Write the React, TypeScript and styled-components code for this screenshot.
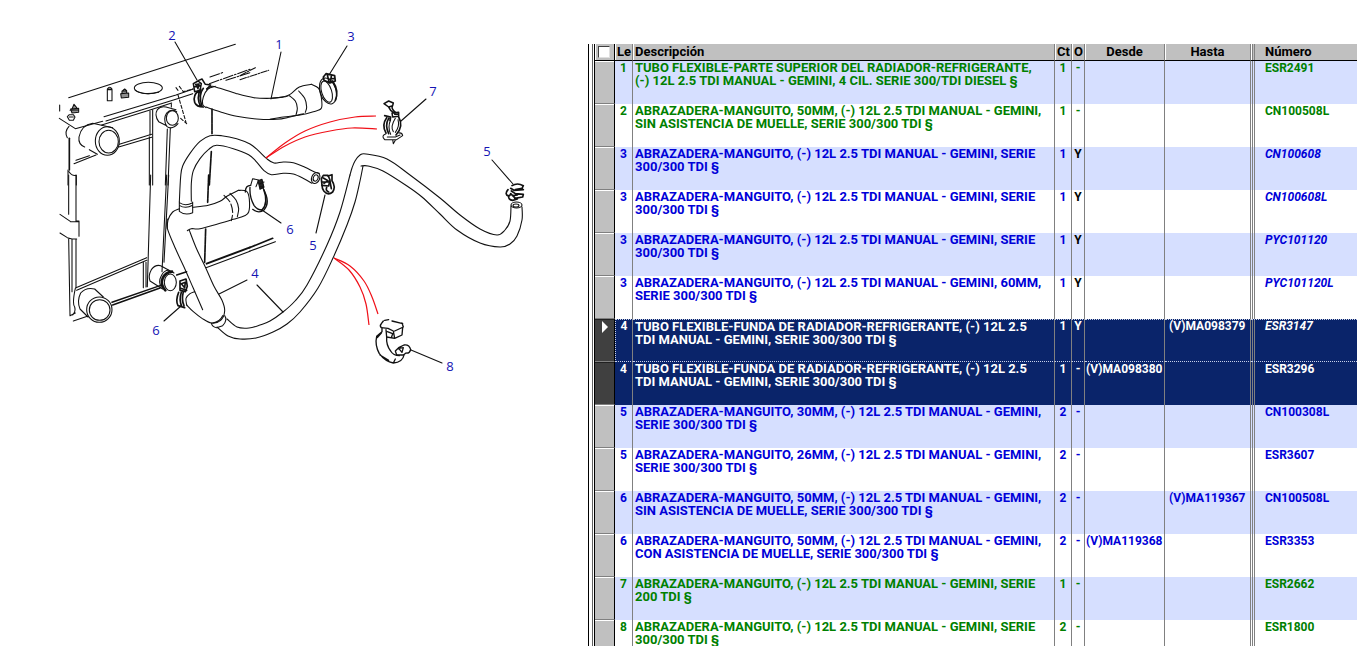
import React from 'react';
import styled, { createGlobalStyle, css } from 'styled-components';

const GlobalStyle = createGlobalStyle`
  *, *::before, *::after { box-sizing: border-box; }
  body { margin: 0; background: #fff; }
`;

const Page = styled.main`
  display: grid;
  grid-template-columns: minmax(0, 588fr) minmax(0, 769fr);
  height: 100vh;
  overflow: hidden;
  background: #fff;
  font-family: Roboto, 'Liberation Sans', sans-serif;
  font-size: 12px;
  line-height: 13px;
`;

const DiagramPane = styled.section`
  overflow: hidden;
`;

const Drawing = styled.svg`
  display: block;
  width: 100%;
  height: auto;
`;

const Callout = styled.text`
  fill: #1414b4;
  font-family: 'Open Sans', 'Noto Sans', sans-serif;
  font-size: 13px;
  text-anchor: middle;
`;

const ListPane = styled.section`
  margin-top: 44px;
  padding-left: 3px;
  border-left: 1px solid #000;
  overflow: hidden;
`;

const ListFrame = styled.div`
  padding-left: 1px;
  border-left: 1px solid #606060;
`;

const PartsTable = styled.table`
  width: 100%;
  table-layout: fixed;
  border-collapse: separate;
  border-spacing: 0;
  border-left: 1px solid #000;
  font-weight: 700;
`;

const Col = styled.col<{ $w?: number }>`
  ${p => p.$w && `width: ${p.$w}px;`}
`;

const rules = css`
  background-image: linear-gradient(90deg, transparent 1px, #808080 1px 2px, transparent 2px 3px, #808080 3px 4px, transparent 4px);
`;

type Align = 'left' | 'center';

const HeadCell = styled.th<{ $align?: Align; $number?: boolean; $gutter?: boolean }>`
  height: 17px;
  padding: 1px 0 0 ${p => (p.$number ? 14 : p.$align === 'center' ? 0 : 2)}px;
  overflow: hidden;
  vertical-align: top;
  white-space: nowrap;
  font-size: 13px;
  text-align: ${p => p.$align ?? 'left'};
  color: #000;
  background-color: #c0c0c0;
  border-right: ${p => (p.$number ? 0 : 1)}px solid ${p => (p.$gutter ? '#000' : '#808080')};
  border-bottom: 1px solid #000;
  box-shadow: inset 1px 0 #fff;
  ${p => p.$number && rules}
`;

const SelectAll = styled.input`
  appearance: none;
  display: block;
  width: 12px;
  height: 12px;
  margin: 1px 0 0 1px;
  background: #fff;
  border: 1px solid #404040;
  border-right-color: #e0e0e0;
  border-bottom-color: #e0e0e0;
`;

type Tone = 'green' | 'blue';

const Row = styled.tr<{ $tone: Tone; $selected?: boolean; $striped: boolean }>`
  height: 43px;
  color: ${p => (p.$selected ? '#fff' : p.$tone === 'green' ? '#008000' : '#0000d8')};
  background: ${p => (p.$selected ? '#0a246a' : p.$striped ? '#d6dfff' : '#fff')};
`;

const Cell = styled.td<{ $align?: Align; $focused?: boolean; $first?: boolean; $dark?: boolean; $pad?: number }>`
  height: 43px;
  padding: ${p => (p.$focused ? 0 : 1)}px 0 0 ${p => p.$pad ?? (p.$align === 'center' ? 0 : 2)}px;
  vertical-align: top;
  white-space: nowrap;
  overflow: hidden;
  text-align: ${p => p.$align ?? 'left'};
  border-right: 1px solid #808080;
  ${p => p.$dark && 'color: #000;'}
  ${p => p.$focused && css`
    border-top: 1px dotted #c8d0e8;
    border-bottom: 1px dotted #c8d0e8;
  `}
  ${p => p.$focused && p.$first && 'border-left: 1px dotted #c8d0e8;'}
`;

const DescriptionCell = styled(Cell)`
  padding-top: 0;
  font-size: 13px;
`;

const NumberCell = styled(Cell)<{ $italic?: boolean }>`
  border-right: 0;
  font-style: ${p => (p.$italic ? 'italic' : 'normal')};
  ${rules}
`;

const Gutter = styled.td<{ $selected?: boolean }>`
  padding: 2px 0 0 7px;
  vertical-align: top;
  background: ${p => (p.$selected ? '#404040' : '#c0c0c0')};
  border-right: 1px solid #000;
  border-bottom: 1px solid #808080;
  box-shadow: inset 0 1px ${p => (p.$selected ? '#202020' : '#fff')};
`;

const Marker = styled.svg`
  display: block;
  width: 7px;
  height: 12px;
`;

interface Part {
  ref: number;
  lines: [string, string];
  qty: number;
  opt: '-' | 'Y';
  from?: string;
  to?: string;
  number: string;
  tone: Tone;
  state?: 'focused' | 'selected';
}

const parts: Part[] = [
  { ref: 1, lines: ['TUBO FLEXIBLE-PARTE SUPERIOR DEL RADIADOR-REFRIGERANTE,', '(-) 12L 2.5 TDI MANUAL - GEMINI, 4 CIL. SERIE 300/TDI DIESEL §'], qty: 1, opt: '-', number: 'ESR2491', tone: 'green' },
  { ref: 2, lines: ['ABRAZADERA-MANGUITO, 50MM, (-) 12L 2.5 TDI MANUAL - GEMINI,', 'SIN ASISTENCIA DE MUELLE, SERIE 300/300 TDI §'], qty: 1, opt: '-', number: 'CN100508L', tone: 'green' },
  { ref: 3, lines: ['ABRAZADERA-MANGUITO, (-) 12L 2.5 TDI MANUAL - GEMINI, SERIE', '300/300 TDI §'], qty: 1, opt: 'Y', number: 'CN100608', tone: 'blue' },
  { ref: 3, lines: ['ABRAZADERA-MANGUITO, (-) 12L 2.5 TDI MANUAL - GEMINI, SERIE', '300/300 TDI §'], qty: 1, opt: 'Y', number: 'CN100608L', tone: 'blue' },
  { ref: 3, lines: ['ABRAZADERA-MANGUITO, (-) 12L 2.5 TDI MANUAL - GEMINI, SERIE', '300/300 TDI §'], qty: 1, opt: 'Y', number: 'PYC101120', tone: 'blue' },
  { ref: 3, lines: ['ABRAZADERA-MANGUITO, (-) 12L 2.5 TDI MANUAL - GEMINI, 60MM,', 'SERIE 300/300 TDI §'], qty: 1, opt: 'Y', number: 'PYC101120L', tone: 'blue' },
  { ref: 4, lines: ['TUBO FLEXIBLE-FUNDA DE RADIADOR-REFRIGERANTE, (-) 12L 2.5', 'TDI MANUAL - GEMINI, SERIE 300/300 TDI §'], qty: 1, opt: 'Y', to: '(V)MA098379', number: 'ESR3147', tone: 'blue', state: 'focused' },
  { ref: 4, lines: ['TUBO FLEXIBLE-FUNDA DE RADIADOR-REFRIGERANTE, (-) 12L 2.5', 'TDI MANUAL - GEMINI, SERIE 300/300 TDI §'], qty: 1, opt: '-', from: '(V)MA098380', number: 'ESR3296', tone: 'blue', state: 'selected' },
  { ref: 5, lines: ['ABRAZADERA-MANGUITO, 30MM, (-) 12L 2.5 TDI MANUAL - GEMINI,', 'SERIE 300/300 TDI §'], qty: 2, opt: '-', number: 'CN100308L', tone: 'blue' },
  { ref: 5, lines: ['ABRAZADERA-MANGUITO, 26MM, (-) 12L 2.5 TDI MANUAL - GEMINI,', 'SERIE 300/300 TDI §'], qty: 2, opt: '-', number: 'ESR3607', tone: 'blue' },
  { ref: 6, lines: ['ABRAZADERA-MANGUITO, 50MM, (-) 12L 2.5 TDI MANUAL - GEMINI,', 'SIN ASISTENCIA DE MUELLE, SERIE 300/300 TDI §'], qty: 2, opt: '-', to: '(V)MA119367', number: 'CN100508L', tone: 'blue' },
  { ref: 6, lines: ['ABRAZADERA-MANGUITO, 50MM, (-) 12L 2.5 TDI MANUAL - GEMINI,', 'CON ASISTENCIA DE MUELLE, SERIE 300/300 TDI §'], qty: 2, opt: '-', from: '(V)MA119368', number: 'ESR3353', tone: 'blue' },
  { ref: 7, lines: ['ABRAZADERA-MANGUITO, (-) 12L 2.5 TDI MANUAL - GEMINI, SERIE', '200 TDI §'], qty: 1, opt: '-', number: 'ESR2662', tone: 'green' },
  { ref: 8, lines: ['ABRAZADERA-MANGUITO, (-) 12L 2.5 TDI MANUAL - GEMINI, SERIE', '300/300 TDI §'], qty: 2, opt: '-', number: 'ESR1800', tone: 'green' },
];

const callouts: [string, number, number][] = [
  ['2', 172, 40], ['1', 279, 49], ['3', 351, 41], ['7', 433, 96], ['5', 487, 156],
  ['6', 290, 234], ['5', 313, 250], ['4', 255, 278], ['6', 156, 335], ['8', 450, 371],
];

/** Smooth curve through a list of points. */
function through(points: string): string {
  const p = points.trim().split(/\s+/).map(s => s.split(',').map(Number));
  let d = `M${p[0][0]} ${p[0][1]}`;
  for (let i = 0; i < p.length - 1; i++) {
    const a = p[i - 1] ?? p[i];
    const b = p[i];
    const c = p[i + 1];
    const e = p[i + 2] ?? c;
    d += `C${b[0] + (c[0] - a[0]) / 6} ${b[1] + (c[1] - a[1]) / 6} ${c[0] - (e[0] - b[0]) / 6} ${c[1] - (e[1] - b[1]) / 6} ${c[0]} ${c[1]}`;
  }
  return d;
}

const Curve = ({ pts, ...rest }: { pts: string } & React.SVGProps<SVGPathElement>) => (
  <path d={through(pts)} {...rest} />
);

/* Each area of the drawing has its own grid of three units to the pixel. */
const area = (x: number, y: number) => `translate(${x} ${y}) scale(0.33333)`;

const Diagram = () => (
  <Drawing viewBox="0 0 588 646" role="img" aria-label="Radiador y manguitos">
    <g fill="none" stroke="#111" strokeWidth="3.2" strokeLinecap="round" strokeLinejoin="round">
      {/* radiator top and left tank */}
      <g transform={area(50, 15)}>
        <path d="M56 248L556 88M29 270V288M28 310L76 341L158 319M162 305L378 240L430 222M168 318L380 252L428 236M155 330L300 285L365 264" />
        <path d="M478 206L600 163M480 186L520 172M528 196L600 173" strokeDasharray="30 5 5 5" />
        <path d="M378 218L384 226M384 240L408 322M388 214L400 230L428 222M392 310L410 326" strokeDasharray="10 6" />
        <ellipse cx="295" cy="219" rx="42" ry="17" />
        <path d="M256 226Q280 242 326 232" />
        <path d="M172 222V257H186V222ZM172 222Q179 212 186 222M174 224H184" />
        <path d="M212 236L236 234V247L214 249ZM216 236V228H230V234M218 227L224 222L230 227" fill="#444" fillOpacity="0.6" />
        <path d="M62 282L86 280V292L66 294ZM66 282L72 268L80 278M60 286L86 284" fill="#444" fillOpacity="0.6" />
        <path d="M52 305L58 299H70L75 306L70 316H58ZM58 306H70" />
        <path d="M57 334Q42 350 52 368M54 465V510M57 470Q66 484 79 481V510" />
        <path d="M58 370V465" strokeWidth="5" />
        {/* upper left outlet */}
        <path d="M142 418L118 404M104 396Q84 388 87 366Q94 330 128 325L188 338" />
        <ellipse cx="172" cy="378" rx="36" ry="43" />
        <ellipse cx="176" cy="380" rx="29" ry="34" />
        <path d="M72 446L138 420M78 436L118 422M208 388L305 358M206 396L305 367" />
        {/* middle column */}
        <path d="M300 288V360M308 284V510M298 365V510M352 342L346 510M361 340L354 510M364 266V276" />
        {/* small outlet */}
        <path d="M350 332L326 320Q312 300 322 284Q332 272 348 276L378 284M384 326Q366 346 350 334Q338 312 350 294Q362 280 380 290" />
        <ellipse cx="367" cy="309" rx="18" ry="22" />
        <path d="M486 282V356M484 410L478 510" strokeWidth="5" strokeDasharray="20 2" />
      </g>

      {/* radiator bottom */}
      <g transform={area(50, 175)}>
        <path d="M56 0V118M78 0V138H87V184M62 140H87M30 118L62 140M30 174L52 188L66 192H80M56 190L60 422L76 414M66 192V350M78 192V338M76 340Q66 386 74 396Q78 412 68 420M70 438L112 424" />
        <path d="M78 338L290 248M80 346L290 256M302 0L292 335M350 0L336 290M356 0L342 262M280 262V338M288 262V336" />
        <path d="M186 382L330 332M188 390L330 339M380 300L410 290" strokeWidth="4.5" />
        <path d="M470 266L600 217" strokeWidth="6" />
        <path d="M468 278L600 229" />
        <path d="M476 0L473 82M467 162L464 262" strokeWidth="5" strokeDasharray="22 2" />
        {/* lower left outlet */}
        <path d="M114 426L90 402Q80 378 92 354Q108 336 134 342L160 366" />
        <circle cx="148" cy="404" r="38" />
        <circle cx="149" cy="405" r="31" />
        {/* lower middle outlet */}
        <path d="M338 342L300 318Q294 302 304 284Q316 268 332 272L372 294" />
        <path d="M346 346Q330 330 338 310Q346 292 366 290" strokeWidth="8" />
        <ellipse cx="361" cy="322" rx="18" ry="25" />
        <path d="M334 336Q324 320 334 302Q342 286 356 286" />
      </g>
      <g transform={area(240, 175)}>
        <path d="M28 218L98 190" strokeWidth="5" />
        <path d="M28 229L106 200" />
      </g>

      {/* bypass hose */}
      <g transform={area(150, 100)}>
        <Curve pts="88,306 92,230 98,198 120,160 150,124 180,107 215,107 260,116 300,132 325,152 350,176 372,189 400,186 430,188 465,202 494,216 508,220" />
        <Curve pts="124,304 124,250 130,212 150,176 176,148 200,136 250,146 296,164 318,184 342,212 364,224 400,220 430,222 462,236 486,250" />
        <ellipse cx="497" cy="234" rx="12" ry="17" transform="rotate(22 497 234)" />
        <ellipse cx="497" cy="234" rx="7" ry="10" transform="rotate(22 497 234)" />
        <path d="M88 306V334Q106 348 128 338V306M88 308Q106 320 128 308M88 316Q106 328 128 316" />
        {/* Y branch to the water pump */}
        <Curve pts="128,322 175,316 210,304 232,288 265,271" />
        <Curve pts="88,326 68,336 54,360 52,386" />
        <Curve pts="265,271 290,274 298,298 296,336 282,348 250,358 210,370 150,386 124,386 112,392" />
        <Curve pts="222,286 240,306 248,336 244,362" strokeDasharray="26 8" />
        <Curve pts="240,280 258,300 266,326 262,350" />
        {/* clamp 6, upper */}
        <path d="M286 276Q286 256 302 256M300 262Q298 290 312 316Q322 330 336 330M308 328Q326 342 342 330Q358 312 348 284L338 262" strokeWidth="4" />
        <path d="M302 256L308 236L326 240L318 260" />
        <path d="M324 242L336 238L342 262L330 268ZM328 252L342 246M330 260H342" fill="#222" />
        <path d="M342 270Q356 310 336 330" strokeWidth="5" />
        {/* clamp 5, middle */}
        <path d="M514 236L520 226H534L540 240L536 258L516 256ZM520 234L534 242L522 250M516 246H538" strokeWidth="5" />
        <path d="M534 228L546 224L546 242Q558 260 548 276Q534 288 522 274Q516 266 516 256M530 262Q526 272 536 276M540 244L544 266" strokeWidth="5" />
      </g>

      {/* top hose */}
      <g transform={area(50, 15)}>
        <Curve pts="470,222 486,214 510,220 560,236 612,248 663,250 700,246 715,242" />
        <Curve pts="468,276 510,290 560,304 620,312 680,313 720,306 760,296" />
        <Curve pts="496,214 474,222 460,246 458,268 468,278" />
        {/* clamp 2 */}
        <path d="M446 228Q428 240 434 262Q440 276 460 276M452 222Q438 248 452 276M460 220Q444 240 456 274" strokeWidth="5" />
        <path d="M430 206L444 198L454 206L450 226L434 230ZM432 216L450 212M446 196L456 192L466 208L482 210L470 222" strokeWidth="4.5" />
        <path d="M436 208L448 206L444 222Z" fill="#222" />
      </g>
      <g transform={area(240, 15)}>
        <Curve pts="93,250 128,246 150,238 178,216 214,208" />
        <Curve pts="214,208 236,220 244,248 244,280 220,290 180,300 130,306 90,313" />
        <Curve pts="148,242 166,258 172,280 168,300" />
        <Curve pts="176,228 194,250 200,276 196,292" />
        <path d="M0 182L46 158M0 194L86 166" strokeDasharray="20 4 5 4" />
        {/* clamp 3 */}
        <ellipse cx="264" cy="228" rx="24" ry="40" transform="rotate(-18 264 228)" />
        <ellipse cx="260" cy="230" rx="15" ry="33" transform="rotate(-18 260 230)" />
        <path d="M250 186L258 176L284 182L286 198L270 204L252 196ZM262 180L268 204M274 182L272 200M270 192L284 190" strokeWidth="5" />
        <path d="M278 198Q298 228 286 256" strokeWidth="5" />
        {/* clip 7 */}
        <path d="M432 266L446 258L460 264L458 272L446 276ZM446 276L452 286L462 294M458 272Q452 280 466 292M456 294L476 292V304L458 306ZM464 298H474" strokeWidth="4.5" />
        <path d="M434 302L452 306L450 316M440 308Q424 330 438 354M446 310Q434 330 446 356M476 306Q492 334 468 360" strokeWidth="5" />
        <path d="M452 314Q442 336 452 358M466 310Q450 336 460 350M474 314Q480 334 466 352" />
        <path d="M438 356Q422 362 434 374H470L488 362Q486 352 476 354M442 366L466 366L480 360M458 374L460 386L466 376" />
      </g>

      {/* lower hose */}
      <g transform={area(50, 175)}>
        <Curve pts="352,132 352,160 376,220 402,276 430,340 458,404" />
        <Curve pts="418,166 440,222 466,276 492,334 516,376 524,408 512,436 484,444 456,430 430,410 410,390" />
        <Curve pts="410,390 408,370 420,356 434,350" />
        <path d="M484 444Q486 456 500 458M524 422Q534 436 518 452L500 458M488 444Q510 440 518 422" />
        {/* clamp 6, lower */}
        <path d="M390 318L408 312L412 334L406 350L390 346ZM394 326L406 322L404 338ZM392 340L410 346" strokeWidth="5" />
        <path d="M386 352Q376 376 384 392L404 398M394 352Q386 376 396 396M400 350Q394 376 402 392" strokeWidth="5" />
      </g>

      {/* expansion tank hose */}
      <g strokeWidth="1.1">
        <Curve pts="350,175 340,212 327,245 307,285 295,301 283,312 270,321 260,325 249,328 237,327 227,319" />
        <Curve pts="363,166 360,181 355,202 347,225 333,258 318,288 300,312 287,324 273,332 256,338 240,339 228,336 217,327" />
        <Curve pts="350,175 352,168 355,161 360,155 366,154 387,159 410,175 440,198 460,215 480,229 497,235 505,230 510,221 511,206" />
        <Curve pts="361,166 368,166 383,171 407,186 422,197 440,214 457,230 480,243 500,247 510,244 517,236 522,220 522,207" />
        <ellipse cx="516.500" cy="205" rx="5.500" ry="3" />
        <ellipse cx="516" cy="205.500" rx="3" ry="1.500" />
      </g>
      <g transform={area(440, 135)} strokeWidth="5">
        <path d="M216 152Q232 142 250 152L246 160L226 164M204 164Q192 178 206 184L212 178M212 160L222 166L250 164M214 168L226 176L250 178L248 186L224 190M206 182Q204 194 218 196L232 192M212 176L224 188M218 182L232 180" />
      </g>

      {/* clip 8 */}
      <g transform={area(240, 175)} strokeWidth="4">
        <path d="M430 438L424 446M434 436L446 434M456 438L488 446M424 446Q418 452 424 458L444 460L460 468L464 490L440 486L438 464M464 468L490 456L486 444M488 458L486 480L464 490M442 470L458 476L454 488" />
        <path d="M426 458V470L410 484Q404 510 418 536Q436 560 460 564Q488 562 492 540M440 486Q438 510 452 528Q460 542 478 542M412 488L424 474M420 540L446 556M460 564L466 552" />
        <path d="M466 528L476 518L492 510Q508 508 512 524Q508 536 498 534L490 540L470 540ZM476 520L490 518L486 532Z" />
      </g>

      {/* leader lines */}
      <g strokeWidth="1.1">
        <path d="M175 42L197 80M281 52L271 99M347 46L329 75M426 99L401 121M492 160L513 184M262 210L281 223M325 195L316 233M247 280L219 294M257 285L283 312M164 321L181 306M411 350L442 363" />
      </g>
    </g>

    <g fill="none" stroke="#f01018" strokeWidth="1.2">
      <Curve pts="266,158 285,143 305,131 330,122 355,117 376,116" />
      <Curve pts="266,158 285,146 305,137 330,131 352,128 377,129" />
      <Curve pts="334,258 349,270 360,287 366,304 369,325" />
      <Curve pts="334,258 350,266 364,281 372,297 378,314" />
    </g>

    {callouts.map(([label, x, y]) => (
      <Callout key={`${label}-${x}`} x={x} y={y}>{label}</Callout>
    ))}
  </Drawing>
);

const PartRow = ({ part, striped }: { part: Part; striped: boolean }) => {
  const focused = part.state === 'focused';
  const selected = part.state !== undefined;
  return (
    <Row $tone={part.tone} $selected={selected} $striped={striped}>
      <Gutter $selected={selected}>
        {focused && (
          <Marker viewBox="0 0 7 12" aria-hidden="true"><path d="M0 0L6 6L0 12Z" fill="#fff" /></Marker>
        )}
      </Gutter>
      <Cell $align="center" $focused={focused} $first>{part.ref}</Cell>
      <DescriptionCell $focused={focused}>{part.lines[0]}<br />{part.lines[1]}</DescriptionCell>
      <Cell $align="center" $focused={focused}>{part.qty}</Cell>
      <Cell $align="center" $focused={focused} $dark={part.opt === 'Y' && !selected}>{part.opt}</Cell>
      <Cell $focused={focused} $pad={1}>{part.from}</Cell>
      <Cell $focused={focused} $pad={4}>{part.to}</Cell>
      <NumberCell $focused={focused} $italic={part.opt === 'Y'} $pad={14}>{part.number}</NumberCell>
    </Row>
  );
};

export default function App() {
  return (
    <>
      <GlobalStyle />
      <Page>
        <DiagramPane><Diagram /></DiagramPane>
        <ListPane>
          <ListFrame>
            <PartsTable>
              <colgroup>
                <Col $w={20} /><Col $w={18} /><Col /><Col $w={17} />
                <Col $w={13} /><Col $w={80} /><Col $w={86} /><Col $w={106} />
              </colgroup>
              <thead>
                <tr>
                  <HeadCell $gutter><SelectAll type="checkbox" aria-label="Seleccionar todo" /></HeadCell>
                  <HeadCell>Le</HeadCell>
                  <HeadCell>Descripción</HeadCell>
                  <HeadCell>Ct</HeadCell>
                  <HeadCell>O</HeadCell>
                  <HeadCell $align="center">Desde</HeadCell>
                  <HeadCell $align="center">Hasta</HeadCell>
                  <HeadCell $number>Número</HeadCell>
                </tr>
              </thead>
              <tbody>
                {parts.map((part, i) => (
                  <PartRow key={`${part.ref}-${part.number}`} part={part} striped={i % 2 === 0} />
                ))}
              </tbody>
            </PartsTable>
          </ListFrame>
        </ListPane>
      </Page>
    </>
  );
}
